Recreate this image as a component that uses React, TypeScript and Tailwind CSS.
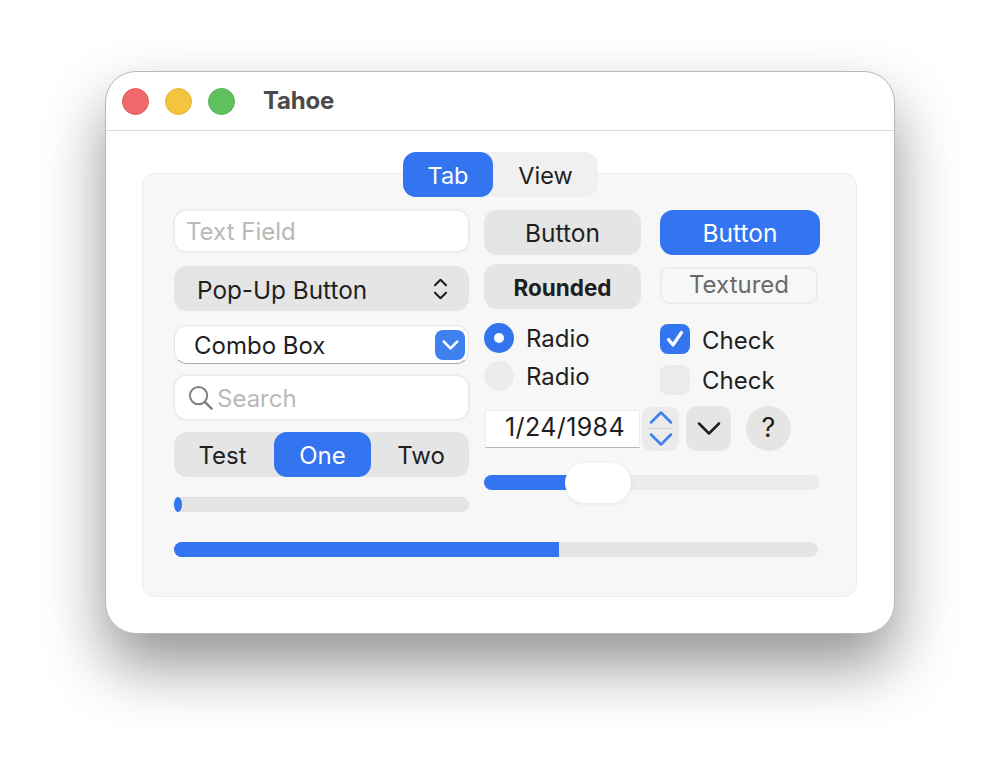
import React from "react";

const BLUE = "bg-[#3374f0]";

function Chevron({ className, up, weight = 2 }: { className: string; up?: boolean; weight?: number }) {
  return (
    <svg viewBox="0 0 20 12" className={className} fill="none" stroke="currentColor" strokeWidth={weight} strokeLinecap="round" strokeLinejoin="round">
      <path d={up ? "M2 10 L10 2 L18 10" : "M2 2 L10 10 L18 2"} />
    </svg>
  );
}

export default function App() {
  return (
    <div className="w-full h-[773px] bg-white pt-[71px] pl-[105px] overflow-hidden text-[#1f1f1f] font-['Inter','Liberation_Sans',sans-serif]">
      <div className="w-[790px] h-[563px] bg-white rounded-[31px] border border-[#b8b8b8] shadow-[0_32px_62px_rgba(0,0,0,0.42)] flex flex-col">
        {/* title bar */}
        <div className="h-[59px] shrink-0 border-b border-[#dcdcdc] flex items-center pl-[16px]">
          <div className="w-[27px] h-[27px] rounded-full bg-[#f0686a] border border-[#dc5a5c]" />
          <div className="w-[27px] h-[27px] rounded-full bg-[#f4c43e] border border-[#e5b637] ml-[16px]" />
          <div className="w-[27px] h-[27px] rounded-full bg-[#5fc15f] border border-[#52b254] ml-[16px]" />
          <div className="ml-[28px] text-[24px] font-bold text-[#4a4a4a] tracking-[-0.2px]">Tahoe</div>
        </div>
        {/* body */}
        <div className="flex-1 flex flex-col pl-[36px] pr-[37px] pt-[21px]">
          <div className="relative z-10 self-center ml-[2px] flex w-[195px] h-[45px] rounded-[13px] bg-[#f0f0f0] text-[23.5px]">
            <div className={`w-[90px] rounded-[13px] ${BLUE} text-white flex items-center justify-center pt-[3px]`}>Tab</div>
            <div className="flex-1 flex items-center justify-center pt-[3px]">View</div>
          </div>
          <div className="-mt-[24px] h-[424px] rounded-[13px] border border-[#ececec] bg-[#f7f7f7] pt-[35px] pl-[30px] flex flex-col">
            <div className="flex">
              {/* left column */}
              <div className="w-[297px] flex flex-col">
                <div className="h-[44px] rounded-[13px] bg-white border-2 border-[#ececec] flex items-center pl-[11px] pt-[2px] text-[24px] text-[#b9b9b9]">Text Field</div>
                <div className="mt-[13px] mx-px h-[45px] rounded-[13px] bg-[#e5e5e5] flex items-center justify-between pl-[23px] pr-[21px] text-[24.3px]">
                  <span className="pt-[4px]">Pop-Up Button</span>
                  <svg viewBox="0 0 16 26" className="w-[15px] h-[24px]" fill="none" stroke="#222" strokeWidth="2.3" strokeLinecap="round" strokeLinejoin="round">
                    <path d="M2 9 L8 3 L14 9" />
                    <path d="M2 17 L8 23 L14 17" />
                  </svg>
                </div>
                <div className="mt-[14px] mx-px h-[39px] rounded-[13px] bg-white border border-[#e6e6e6] border-b-[#a9a9a9] flex items-center justify-between pl-[19px] pr-[3px] text-[24px]">
                  <span className="pt-[2px]">Combo Box</span>
                  <div className="w-[30px] h-[30px] rounded-[8px] bg-[#3d80ee] flex items-center justify-center text-white">
                    <Chevron className="w-[17px] h-[10px]" weight={3.2} />
                  </div>
                </div>
                <div className="mt-[10px] h-[47px] rounded-[14px] bg-white border-2 border-[#ececec] flex items-center pl-[13px] text-[24px] text-[#b9b9b9]">
                  <svg viewBox="0 0 26 26" className="w-[25px] h-[25px] shrink-0" fill="none" stroke="#808080" strokeWidth="2" strokeLinecap="round">
                    <circle cx="11" cy="11" r="9" />
                    <path d="M17.5 17.5 L24.5 24.5" strokeWidth="2.6" />
                  </svg>
                  <span className="ml-[4px] pt-[2px]">Search</span>
                </div>
                <div className="mt-[11px] mx-px h-[45px] rounded-[13px] bg-[#e5e5e5] flex text-[24px]">
                  <div className="w-[100px] flex items-center justify-center pt-[2px] pr-[3px]">Test</div>
                  <div className={`w-[97px] rounded-[13px] ${BLUE} text-white flex items-center justify-center pt-[2px]`}>One</div>
                  <div className="flex-1 flex items-center justify-center pt-[2px] pl-[2px]">Two</div>
                </div>
                <div className="mt-[20px] mx-px h-[15px] rounded-full bg-[#e5e5e5] border border-[#e0e0e0] flex">
                  <div className={`w-[8px] h-[15px] -mt-px -ml-px rounded-[50%] ${BLUE}`} />
                </div>
              </div>
              {/* right area */}
              <div className="ml-[14px] w-[336px] flex flex-col">
                <div className="flex pt-px">
                  <div className="w-[157px] flex flex-col">
                    <div className="h-[45px] rounded-[13px] bg-[#e5e5e5] flex items-center justify-center pt-[2px] text-[24.5px]">Button</div>
                    <div className="mt-[9px] h-[45px] rounded-[13px] bg-[#e5e5e5] flex items-center justify-center pt-[2px] text-[22.5px] font-bold">Rounded</div>
                    <div className="mt-[14px] h-[30px] flex items-center text-[24px]">
                      <div className={`w-[30px] h-[30px] rounded-full ${BLUE} flex items-center justify-center`}>
                        <div className="w-[10px] h-[10px] rounded-full bg-white" />
                      </div>
                      <span className="ml-[12px] mt-[2px]">Radio</span>
                    </div>
                    <div className="mt-[8px] h-[30px] flex items-center text-[24px]">
                      <div className="w-[30px] h-[30px] rounded-full bg-[#ebebeb]" />
                      <span className="ml-[12px] mt-[2px]">Radio</span>
                    </div>
                  </div>
                  <div className="ml-[19px] w-[160px] flex flex-col">
                    <div className={`h-[45px] rounded-[13px] ${BLUE} text-white flex items-center justify-center pt-[2px] text-[24.5px]`}>Button</div>
                    <div className="mt-[12px] w-[158px] h-[37px] rounded-[9px] border-2 border-[#ececec] flex items-center justify-center pb-[1px] text-[24px] text-[#6a6a6a]">Textured</div>
                    <div className="mt-[20px] h-[30px] flex items-center text-[24px]">
                      <div className={`w-[30px] h-[30px] rounded-[8px] ${BLUE} flex items-center justify-center`}>
                        <svg viewBox="0 0 20 20" className="w-[20px] h-[20px]" fill="none" stroke="#fff" strokeWidth="3.2" strokeLinecap="round" strokeLinejoin="round">
                          <path d="M3.5 10.5 L8 16 L16.5 3.5" />
                        </svg>
                      </div>
                      <span className="ml-[12px] mt-[4px]">Check</span>
                    </div>
                    <div className="mt-[11px] h-[30px] flex items-center text-[24px]">
                      <div className="w-[30px] h-[30px] rounded-[8px] bg-[#ebebeb]" />
                      <span className="ml-[12px] mt-[2px]">Check</span>
                    </div>
                  </div>
                </div>
                <div className="mt-[11px] h-[45px] flex items-center">
                  <div className="ml-px w-[155px] h-[38px] bg-white border border-[#ececec] border-b-[#b5b5b5] flex items-center justify-center pl-[5px] pb-[1px] text-[25px] tracking-[0.4px]">1/24/1984</div>
                  <div className="ml-[2px] w-[37px] h-[44px] rounded-[9px] bg-[#ebebeb] flex flex-col items-center justify-center text-[#3d80ee]">
                    <Chevron up className="w-[26px] h-[15px] shrink-0" />
                    <div className="w-[25px] h-px bg-[#d4d4d4] my-[3px] shrink-0" />
                    <Chevron className="w-[26px] h-[15px] shrink-0" />
                  </div>
                  <div className="ml-[7px] w-[45px] h-[45px] rounded-[11px] bg-[#e5e5e5] flex items-center justify-center text-[#1f1f1f]">
                    <Chevron className="w-[26px] h-[15px]" />
                  </div>
                  <div className="ml-[15px] w-[45px] h-[45px] rounded-full bg-[#e5e5e5] flex items-center justify-center text-[27px]">?</div>
                </div>
                <div className="relative mt-[24px] h-[15px] rounded-full bg-[#ebebeb]">
                  <div className={`w-[90px] h-full rounded-l-full ${BLUE}`} />
                  <div className="absolute left-[81px] top-[-12px] w-[66px] h-[40px] rounded-full bg-white shadow-[0_1px_4px_rgba(0,0,0,0.08)]" />
                </div>
              </div>
            </div>
            <div className="mt-[30px] ml-px w-[644px] h-[15px] rounded-full bg-[#e5e5e5]">
              <div className={`w-[385px] h-full rounded-l-full ${BLUE}`} />
            </div>
          </div>
        </div>
      </div>
    </div>
  );
}
